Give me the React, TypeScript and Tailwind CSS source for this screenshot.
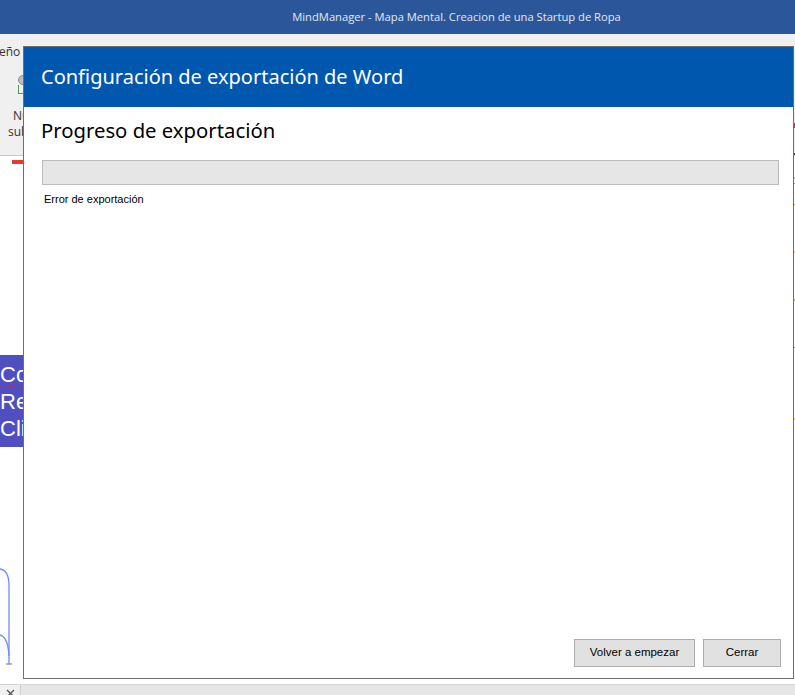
import React from "react"

// Word export dialog sitting on top of the MindManager window
function ExportDialog() {
  return (
    <div className="absolute left-[23px] top-[46px] w-[771px] h-[633px] border border-[#6e6e6e] bg-white flex flex-col">
      {/* header */}
      <div className="h-[60px] bg-[#0057ae] flex items-center pl-[17px]">
        <span className="text-white text-[20px] font-['Segoe_UI','Noto_Sans',sans-serif] leading-none">
          Configuración de exportación de Word
        </span>
      </div>

      {/* body */}
      <div className="flex-1 flex flex-col pl-[18px] pr-[14px]">
        <h2 className="mt-[10px] ml-[-1px] text-[20.3px] text-black font-['Segoe_UI','Noto_Sans',sans-serif] leading-[26px]">
          Progreso de exportación
        </h2>
        <div className="mt-[17px] h-[25px] bg-[#e6e6e6] border border-[#bcbcbc]" />
        <p className="mt-[6px] ml-[2px] text-[11px] text-black font-['Liberation_Sans',Arial,sans-serif]">
          Error de exportación
        </p>

        <div className="mt-auto mb-[11px] mr-[-2px] flex justify-end gap-[8px]">
          <button className="w-[121px] h-[28px] bg-[#e1e1e1] border border-[#adadad] text-[11.5px] text-black font-['Liberation_Sans',Arial,sans-serif]">
            Volver a empezar
          </button>
          <button className="w-[78px] h-[28px] bg-[#e1e1e1] border border-[#adadad] text-[11.5px] text-black font-['Liberation_Sans',Arial,sans-serif]">
            Cerrar
          </button>
        </div>
      </div>
    </div>
  )
}

export default function App() {
  return (
    <div className="relative w-[795px] h-[695px] overflow-hidden bg-white font-['Segoe_UI','Noto_Sans',sans-serif]">
      {/* title bar */}
      <div className="h-[34px] bg-[#2b579a] flex items-center justify-center pl-[118px]">
        <span className="text-[11.2px] text-[#e3e8f1] font-['Segoe_UI','Open_Sans',sans-serif]">
          MindManager - Mapa Mental. Creacion de una Startup de Ropa
        </span>
      </div>

      {/* ribbon */}
      <div className="h-[122px] bg-[#f0f0f0] border-b border-[#c8c8c8] flex flex-col text-[12px] text-[#333]">
        <span className="mt-[12px] ml-[-1px] leading-none font-['Open_Sans',sans-serif]">eño</span>
        <div className="mt-[17px] ml-[18px] flex flex-col items-start">
          <div className="w-[10px] h-[10px] rounded-full bg-[#bdbdbd] border border-[#8a8a8a]" />
          <div className="w-[5px] h-[9px] border-l border-b border-[#5a9a4a]" />
        </div>
        <div className="mt-[14px] ml-[13px] leading-[16px] font-['Open_Sans',sans-serif]">
          <div>Nu</div>
          <div className="ml-[-5px]">sub</div>
        </div>
      </div>

      {/* map canvas */}
      <div className="relative h-[524px] bg-white">
        <div className="ml-[12px] mt-[4px] w-[11px] h-[4px] bg-[#e8392f]" />

        {/* central topic, mostly hidden behind the dialog */}
        <div className="mt-[191px] w-[140px] h-[92px] bg-[#4f4fc2]">
          <div className="pt-[6px] text-white text-[22px] leading-[27px] font-['Liberation_Sans',Arial,sans-serif]">
            <div className="w-fit underline decoration-wavy decoration-[#e02020] decoration-1 underline-offset-2">Compra</div>
            <div>Reventa</div>
            <div>Clientes</div>
          </div>
        </div>

        {/* branch connectors */}
        <svg className="absolute left-0 top-[404px]" width="23" height="110" viewBox="0 0 23 110">
          <path d="M0 5 Q9 6 9 22 L9 100" fill="none" stroke="#6f8ff5" strokeWidth="1.3" />
          <path d="M0 71 Q8 73 9 92" fill="none" stroke="#6f8ff5" strokeWidth="1.3" />
          <path d="M6 100 L12 100" stroke="#6f8ff5" strokeWidth="1.3" />
        </svg>

        {/* right edge markers */}
        <div className="absolute right-0 top-[0px] w-[2px] h-full flex flex-col">
          <div className="mt-[-37px] h-[5px] bg-[#d33a3a]" />
          <div className="mt-[25px] h-[2px] bg-[#5a3a6a]" />
          <div className="mt-[22px] h-[2px] bg-[#c9c9c9]" />
          <div className="mt-[4px] h-[1px] bg-[#e08a30]" />
          <div className="mt-[20px] h-[1px] bg-[#e08a30]" />
          <div className="mt-[46px] h-[2px] bg-[#f0c090]" />
          <div className="mt-[46px] h-[2px] bg-[#e8b080]" />
          <div className="mt-[46px] h-[1px] bg-[#e07a20]" />
          <div className="mt-[70px] h-[2px] bg-[#f0d040]" />
        </div>
      </div>

      {/* status bar */}
      <div className="h-[15px] flex bg-[#e6e6e6] border-t border-[#d4d4d4]">
        <div className="w-[21px] bg-[#f0f0f0] border-r border-[#d0d0d0] flex items-end justify-center pb-[1px]">
          <svg width="9" height="9" viewBox="0 0 9 9">
            <path d="M1 1 L8 8 M8 1 L1 8" stroke="#555" strokeWidth="1.4" />
          </svg>
        </div>
      </div>

      <ExportDialog />
    </div>
  )
}
